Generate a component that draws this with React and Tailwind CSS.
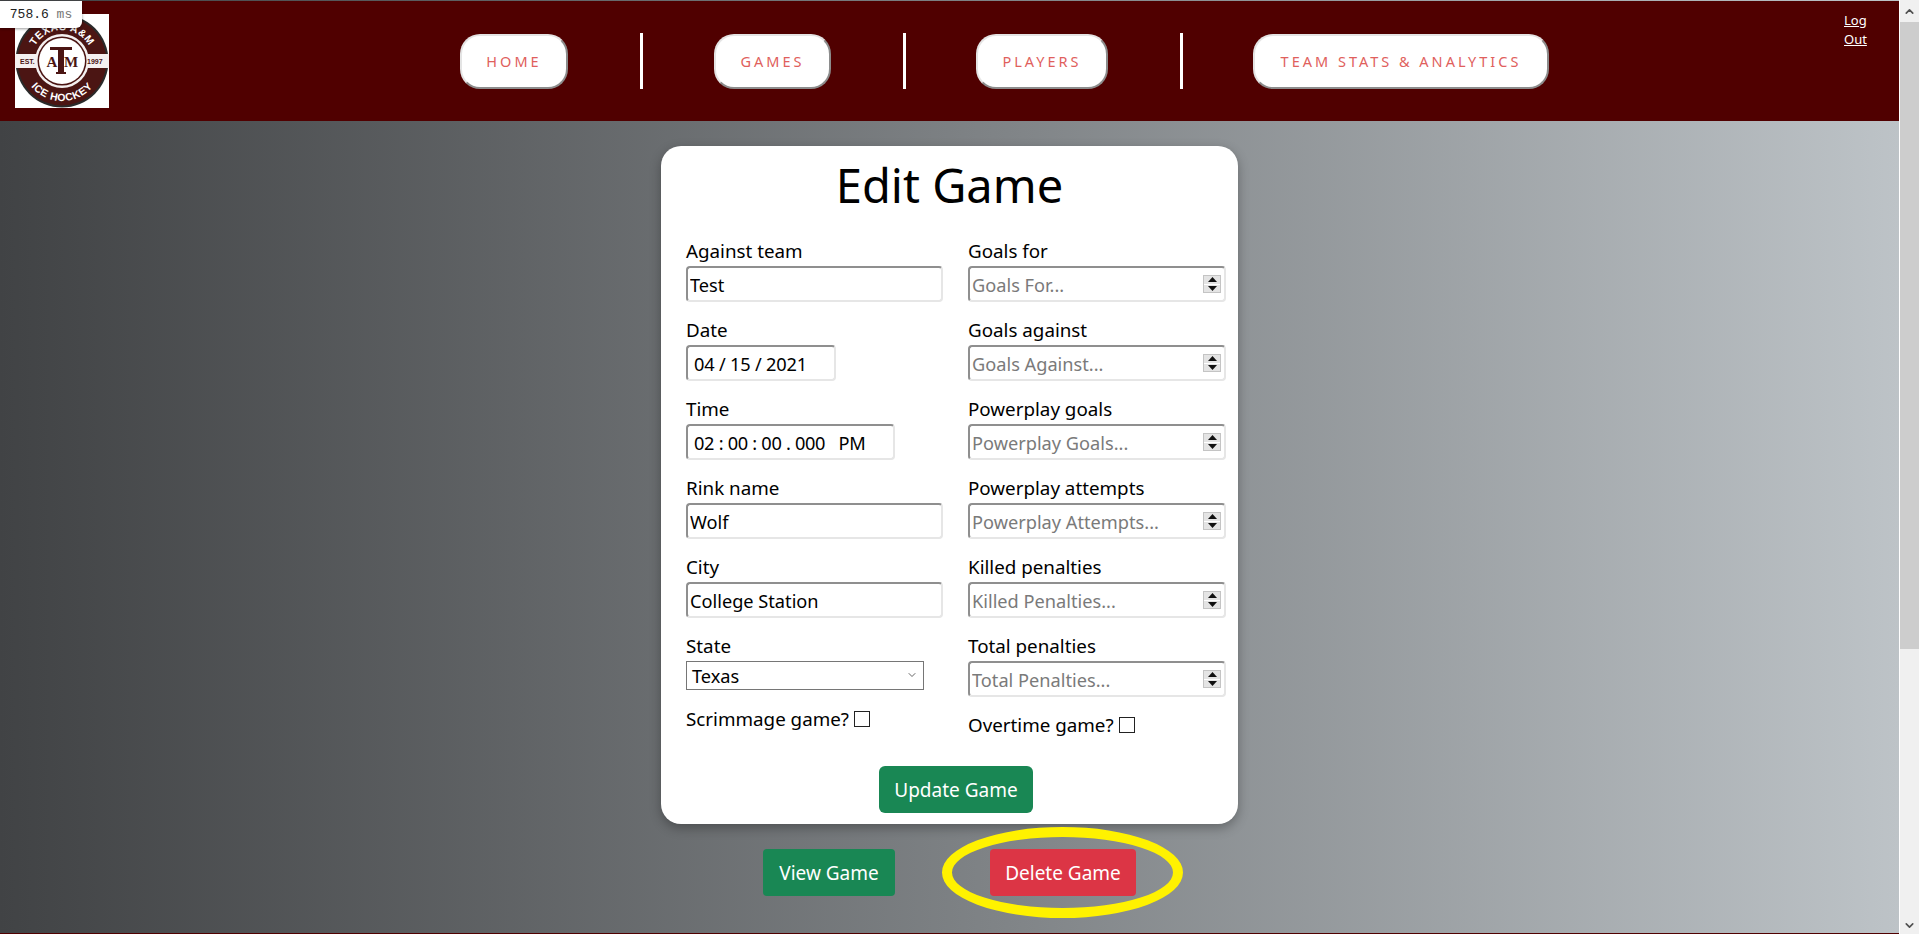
import React from 'react';
import { ChevronUp, ChevronDown } from 'lucide-react';

const NavButton = ({ label, width }) => (
    <a className={`${width} h-[55px] pt-[1px] shrink-0 flex items-center justify-center bg-white rounded-[20px] border-2 border-t-[#e4e4e4] border-l-[#e4e4e4] border-r-[#8c8c8c] border-b-[#8c8c8c] text-[#e0605c] text-[14.5px] tracking-[3px]`}>
        {label}
    </a>
);

const Divider = () => <div className="w-[3px] h-[56px] bg-white shrink-0" />;

const inputClass = 'h-[36px] pt-[2px] bg-white text-black text-[18.2px] rounded-[4px] border-2 border-t-[#8f8f8f] border-l-[#8f8f8f] border-r-[#e6e6e6] border-b-[#e6e6e6] outline-none placeholder:text-[#7a7a7a]';

const Field = ({ label, children }) => (
    <div className="mb-[16px]">
        <label className="block h-[27px] leading-[25px] text-[18.8px] text-black">{label}</label>
        {children}
    </div>
);

const TextField = ({ label, value, width = 'w-full', pad = 'px-[2px]' }) => (
    <Field label={label}>
        <input readOnly value={value} className={`${inputClass} ${width} ${pad}`} />
    </Field>
);

const NumberField = ({ label, placeholder }) => (
    <Field label={label}>
        <div className="relative">
            <input readOnly placeholder={placeholder} className={`${inputClass} w-full px-[2px]`} />
            <div className="absolute right-[5px] top-[9px] w-[18px] h-[18px] flex flex-col bg-[#e4e4e4] border border-[#c4c4c4]">
                <span className="flex-1 flex items-center justify-center border-b border-[#ffffff]">
                    <svg width="9" height="5" viewBox="0 0 9 5"><path d="M4.5 0L9 5H0z" fill="#111" /></svg>
                </span>
                <span className="flex-1 flex items-center justify-center">
                    <svg width="9" height="5" viewBox="0 0 9 5"><path d="M0 0H9L4.5 5z" fill="#111" /></svg>
                </span>
            </div>
        </div>
    </Field>
);

const Logo = () => (
    <svg width="94" height="94" viewBox="0 0 94 94" className="bg-white shrink-0">
        <defs>
            <path id="arcTop" d="M16 47A31 31 0 0 1 78 47" />
            <path id="arcBottom" d="M7 47A40 40 0 0 0 87 47" />
        </defs>
        <circle cx="47" cy="47" r="46.5" fill="#2a2a2a" />
        <circle cx="47" cy="47" r="44.5" fill="#4b1513" />
        <rect x="0" y="40" width="94" height="14" fill="#f4f0f0" />
        <circle cx="47" cy="47" r="27" fill="#f4f0f0" />
        <circle cx="47" cy="47" r="24.5" fill="#4b1513" />
        <circle cx="47" cy="47" r="23" fill="#ffffff" />
        <text fontFamily="'Liberation Sans', sans-serif" fontSize="10.5" fontWeight="700" fill="#fff" letterSpacing="0.5">
            <textPath href="#arcTop" startOffset="50%" textAnchor="middle">TEXAS A&amp;M</textPath>
        </text>
        <text fontFamily="'Liberation Sans', sans-serif" fontSize="10.5" fontWeight="700" fill="#fff" letterSpacing="0.5">
            <textPath href="#arcBottom" startOffset="50%" textAnchor="middle">ICE HOCKEY</textPath>
        </text>
        <text x="5" y="50" fontFamily="'Liberation Sans', sans-serif" fontSize="7" fontWeight="700" fill="#4b1513">EST.</text>
        <text x="72" y="50" fontFamily="'Liberation Sans', sans-serif" fontSize="7" fontWeight="700" fill="#4b1513">1997</text>
        <rect x="35" y="33" width="22" height="3" fill="#4b1513" />
        <rect x="43" y="33" width="6" height="26" fill="#4b1513" />
        <rect x="41" y="58" width="10" height="2" fill="#4b1513" />
        <text x="37" y="53" fontFamily="'Liberation Serif', serif" fontSize="15" fontWeight="700" textAnchor="middle" fill="#4b1513">A</text>
        <text x="56" y="53" fontFamily="'Liberation Serif', serif" fontSize="15" fontWeight="700" textAnchor="middle" fill="#4b1513">M</text>
    </svg>
);

export default function App() {
    return (
        <div className="relative flex h-[934px] w-[1920px] overflow-hidden bg-white font-['Noto_Sans',sans-serif]">
            <div className="flex-1 min-w-0 flex flex-col mr-[1px] h-full bg-gradient-to-r from-[#414345] to-[#bdc3c7] border-b border-[#500000]">
                {/* Header */}
                <div className="h-[120px] mt-[1px] shrink-0 bg-[#500000] flex items-start">
                    <div className="ml-[15px] mt-[13px]"><Logo /></div>
                    <nav className="flex items-center mt-[32px]">
                        <div className="ml-[351px]"><NavButton label="HOME" width="w-[108px]" /></div>
                        <div className="ml-[72px]"><Divider /></div>
                        <div className="ml-[71px]"><NavButton label="GAMES" width="w-[117px]" /></div>
                        <div className="ml-[72px]"><Divider /></div>
                        <div className="ml-[70px]"><NavButton label="PLAYERS" width="w-[132px]" /></div>
                        <div className="ml-[72px]"><Divider /></div>
                        <div className="ml-[70px]"><NavButton label="TEAM STATS & ANALYTICS" width="w-[296px]" /></div>
                    </nav>
                    <a className="ml-[295px] mt-[10px] w-[30px] text-white text-[13px] leading-[19px] underline">Log Out</a>
                </div>

                {/* Card */}
                <div className="w-[577px] h-[678px] ml-[661px] mt-[25px] shrink-0 bg-white rounded-[20px] shadow-[0_4px_12px_rgba(0,0,0,0.3)] px-[25px]">
                    <h1 className="text-[47px] leading-[78px] h-[93px] text-center text-black">Edit Game</h1>
                    <div className="flex">
                        <div className="w-[282px] shrink-0">
                            <TextField label="Against team" value="Test" width="w-[257px]" />
                            <TextField label="Date" value="04 / 15 / 2021" width="w-[150px]" pad="px-[6px] tracking-[-0.2px]" />
                            <TextField label="Time" value="02 : 00 : 00 . 000   PM" width="w-[209px]" pad="px-[6px] tracking-[-0.3px]" />
                            <TextField label="Rink name" value="Wolf" width="w-[257px]" />
                            <TextField label="City" value="College Station" width="w-[257px]" />
                            <Field label="State">
                                <div className="relative w-[238px] h-[29px] border border-[#767676] pl-[5px] text-[18.2px] leading-[29px] text-black bg-white">
                                    Texas
                                    <ChevronDown className="absolute right-[5px] top-[7px] w-[12px] h-[12px] text-[#333]" strokeWidth={1.5} />
                                </div>
                            </Field>
                            <div className="flex items-center text-[18.8px] text-black h-[27px]">
                                Scrimmage game?
                                <input type="checkbox" readOnly className="appearance-none w-[16px] h-[16px] ml-[5px] -mt-[2px] border border-[#222] bg-white" />
                            </div>
                        </div>
                        <div className="w-[258px] shrink-0">
                            <NumberField label="Goals for" placeholder="Goals For..." />
                            <NumberField label="Goals against" placeholder="Goals Against..." />
                            <NumberField label="Powerplay goals" placeholder="Powerplay Goals..." />
                            <NumberField label="Powerplay attempts" placeholder="Powerplay Attempts..." />
                            <NumberField label="Killed penalties" placeholder="Killed Penalties..." />
                            <NumberField label="Total penalties" placeholder="Total Penalties..." />
                            <div className="flex items-center -mt-[1px] text-[18.8px] text-black h-[27px]">
                                Overtime game?
                                <input type="checkbox" readOnly className="appearance-none w-[16px] h-[16px] ml-[5px] -mt-[2px] border border-[#222] bg-white" />
                            </div>
                        </div>
                    </div>
                    <div className="flex mt-[27px] ml-[193px]">
                        <button className="w-[154px] h-[47px] pt-[2px] bg-[#198754] text-white text-[19px] rounded-[6px]">Update Game</button>
                    </div>
                </div>

                {/* Actions */}
                <div className="flex mt-[25px] ml-[763px]">
                    <button className="w-[132px] h-[47px] pt-[2px] bg-[#198754] text-white text-[19px] rounded-[4px]">View Game</button>
                    <button className="w-[146px] h-[47px] pt-[2px] ml-[95px] bg-[#dc3545] text-white text-[19px] rounded-[4px]">Delete Game</button>
                </div>
            </div>

            {/* Scrollbar */}
            <div className="w-[19px] mr-[1px] shrink-0 h-full flex flex-col bg-[#f0f0f0]">
                <div className="h-[22px] shrink-0 flex items-center justify-center">
                    <ChevronUp className="w-[13px] h-[13px] text-[#505050]" strokeWidth={3} />
                </div>
                <div className="h-[627px] bg-[#cdcdcd] shrink-0" />
                <div className="flex-1" />
                <div className="h-[18px] shrink-0 flex items-center justify-center">
                    <ChevronDown className="w-[13px] h-[13px] text-[#505050]" strokeWidth={3} />
                </div>
            </div>

            {/* Timing badge */}
            <div className="absolute left-0 top-[1px] w-[82px] h-[27px] bg-white rounded-br-[6px] shadow-[0_1px_3px_rgba(0,0,0,0.4)] flex items-center justify-center font-['Liberation_Mono',monospace] text-[13px] text-[#222]">
                758.6&nbsp;<span className="text-[#777]">ms</span>
            </div>

            {/* Yellow annotation */}
            <div className="absolute left-[942px] top-[827px] w-[241px] h-[91px] rounded-[50%] border-[10px] border-[#fff200] pointer-events-none" />
        </div>
    );
}
